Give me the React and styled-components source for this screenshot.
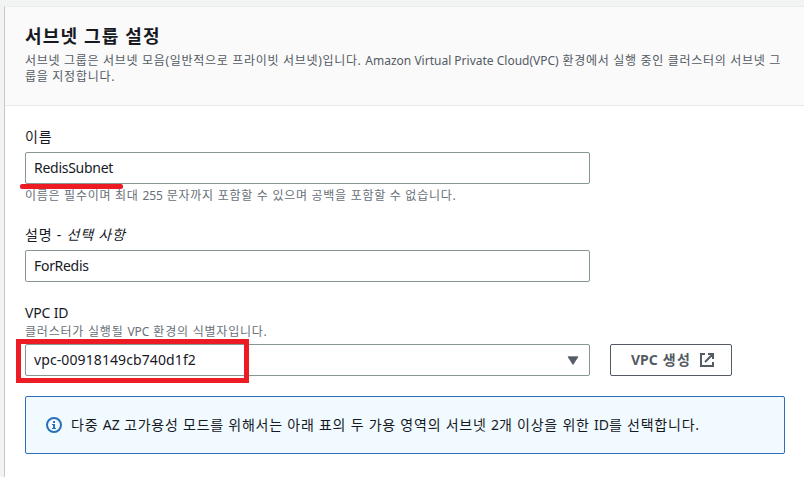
import React from "react";
import styled, { createGlobalStyle } from "styled-components";

const GlobalStyle = createGlobalStyle`
  *, *::before, *::after { box-sizing: border-box; }
  html, body { margin: 0; padding: 0; background: #f2f3f3; overflow: hidden; }
  body { font-family: "Noto Sans", "Noto Sans CJK KR", sans-serif; color: #16191f; font-size: 14px; }
`;

const Page = styled.main`
  height: 477px;
  padding: 6px 0 0 4px;
  overflow: hidden;
`;

const Panel = styled.section`
  width: 900px;
  height: 480px;
  background: #fff;
  border-left: 1px solid #c4c8cb;
  border-top: 1px solid #eaeded;
`;

const Header = styled.header`
  height: 99px;
  padding: 16px 20px 0;
  background: #fafafa;
  border-bottom: 1px solid #e7e9e9;
`;

const Title = styled.h2`
  margin: 0 0 4px;
  font-size: 18px;
  line-height: 26px;
  font-weight: 700;
  white-space: nowrap;
  letter-spacing: 1.15px;
`;

const Line = styled.p`
  margin: 0;
  font-size: 12px;
  line-height: 16px;
  color: ${(p) => p.$color || "#687078"};
  white-space: nowrap;
  letter-spacing: ${(p) => p.$spacing || 0.72}px;
`;

const Hint = styled(Line)`
  padding-top: ${(p) => p.$top || 0}px;
  padding-bottom: ${(p) => p.$bottom || 0}px;
`;

const Latin = styled.span`
  letter-spacing: 0;
`;

const Body = styled.div`
  padding: 20px 20px 0;
  width: 800px;
`;

const Field = styled.div`
  height: ${(p) => p.$height}px;
`;

const Label = styled.label`
  display: block;
  height: ${(p) => p.$height || 26}px;
  line-height: 22px;
  white-space: nowrap;
  letter-spacing: ${(p) => p.$spacing || 0}px;
`;

const Control = styled.div`
  position: relative;
  display: flex;
  align-items: center;
  justify-content: space-between;
  width: 565px;
  height: 32px;
  padding: 0 10px 0 8px;
  background: #fff;
  border: 1px solid #879596;
  border-radius: 2px;
  white-space: nowrap;
`;

const Value = styled.span`
  line-height: 22px;
  letter-spacing: ${(p) => p.$spacing || 0}px;
`;

const Row = styled.div`
  display: flex;
  gap: 20px;
`;

const Button = styled.button`
  display: flex;
  align-items: center;
  width: 122px;
  height: 32px;
  padding: 0 0 0 20px;
  gap: 9px;
  color: #545b64;
  background: #fff;
  border: 1px solid #545b64;
  border-radius: 2px;
  font: inherit;
  font-weight: 700;
  white-space: nowrap;
`;

const Underline = styled.span`
  position: absolute;
  left: -6px;
  top: 31px;
  width: 103px;
  height: 5px;
  border-radius: 2px;
  background: #ed1c24;
`;

const Highlight = styled.span`
  position: absolute;
  left: -10px;
  top: -6px;
  width: 233px;
  height: 44px;
  border: 5px solid #ed1c24;
`;

const Alert = styled.div`
  display: flex;
  align-items: center;
  gap: 9px;
  width: 760px;
  height: 58px;
  margin-top: 20px;
  padding-left: 20px;
  background: #f1faff;
  border: 1px solid #2b70b8;
  border-radius: 2px;
  white-space: nowrap;
`;

const InfoIcon = () => (
  <svg width="16" height="16" viewBox="0 0 16 16" fill="none">
    <circle cx="8" cy="8" r="7" stroke="#2b70b8" strokeWidth="2" />
    <path d="M7 4h2v2H7zM6 7h3v4h1v1H6v-1h1V8H6z" fill="#2b70b8" />
  </svg>
);

const ExternalIcon = () => (
  <svg width="14" height="14" viewBox="0 0 14 14" fill="none" stroke="#545b64" strokeWidth="2">
    <path d="M5 1H1v12h12V9M8 1h5v5M13 1 5 9" />
  </svg>
);

const Caret = () => (
  <svg width="12" height="9" viewBox="0 0 12 9">
    <path d="M1 .8h10L6 8.5z" fill="#545b64" stroke="#545b64" strokeWidth=".8" />
  </svg>
);

export default function App() {
  return (
    <>
      <GlobalStyle />
      <Page>
        <Panel>
          <Header>
            <Title>서브넷 그룹 설정</Title>
            <Line $color="#545b64" $spacing={0.69}>
              서브넷 그룹은 서브넷 모음(일반적으로 프라이빗 서브넷)입니다.{" "}
              <Latin>Amazon Virtual Private Cloud(VPC)</Latin> 환경에서 실행 중인 클러스터의 서브넷 그
            </Line>
            <Line $color="#545b64">룹을 지정합니다.</Line>
          </Header>
          <Body>
            <Field $height={98}>
              <Label $spacing={0.8}>이름</Label>
              <Control>
                <Value $spacing={-0.27}>RedisSubnet</Value>
                <Underline />
              </Control>
              <Hint $top={4}>
                이름은 필수이며 최대 <Latin>255</Latin> 문자까지 포함할 수 있으며 공백을 포함할 수 없습니다.
              </Hint>
            </Field>
            <Field $height={78}>
              <Label $spacing={0.8}>
                설명 - <em>선택 사항</em>
              </Label>
              <Control>
                <Value $spacing={-0.3}>ForRedis</Value>
              </Control>
            </Field>
            <Label $height={22} $spacing={-0.15}>VPC ID</Label>
            <Hint $bottom={4} $spacing={0.78}>
              클러스터가 실행될 <Latin>VPC</Latin> 환경의 식별자입니다.
            </Hint>
            <Row>
              <Control>
                <Value $spacing={0.1}>vpc-00918149cb740d1f2</Value>
                <Caret />
                <Highlight />
              </Control>
              <Button>
                <Value $spacing={1.3}>
                  <Latin>VPC</Latin> 생성
                </Value>
                <ExternalIcon />
              </Button>
            </Row>
            <Alert>
              <InfoIcon />
              <Value $spacing={0.76}>
                다중 <Latin>AZ</Latin> 고가용성 모드를 위해서는 아래 표의 두 가용 영역의 서브넷 <Latin>2</Latin>개 이상을 위한{" "}
                <Latin>ID</Latin>를 선택합니다.
              </Value>
            </Alert>
          </Body>
        </Panel>
      </Page>
    </>
  );
}
